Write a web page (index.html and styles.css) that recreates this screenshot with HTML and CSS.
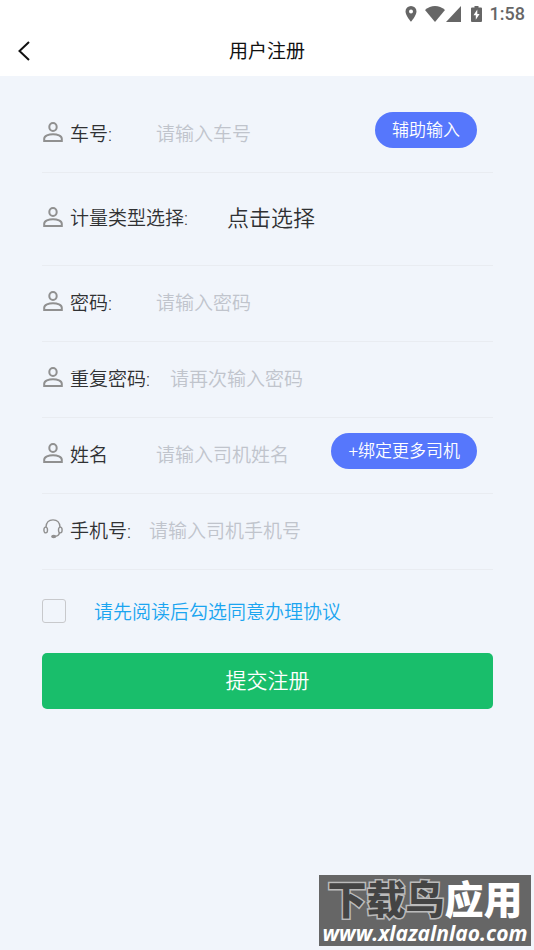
FILE: index.html
```html
<!DOCTYPE html>
<html lang="zh-CN">
<head>
<meta charset="utf-8">
<meta name="viewport" content="width=device-width, initial-scale=1">
<title>用户注册</title>
<link rel="stylesheet" href="styles.css">
</head>
<body>
<svg class="sprite" aria-hidden="true">
  <symbol id="person" viewBox="0 0 20 20">
    <ellipse cx="10" cy="5" rx="3.700" ry="4"/>
    <path d="M1.200 19v-2.200c0-2.900 4.400-4.600 8.800-4.600s8.800 1.700 8.800 4.600V19z"/>
  </symbol>
  <symbol id="headset" viewBox="0 0 20 20">
    <path d="M3 8C3.300 3.600 6.100.9 10 .9S16.700 3.600 17 8"/>
    <ellipse cx="2.700" cy="11" rx="1.800" ry="2.900"/>
    <ellipse cx="17.300" cy="11" rx="1.800" ry="2.900"/>
    <path d="M16.600 13.700c-.5 2.200-1.900 3.400-4.200 3.700"/>
    <ellipse cx="10.700" cy="17.500" rx="1.900" ry="1" fill="currentColor"/>
  </symbol>
</svg>
<div class="status">
  <svg class="status-pin" width="12" height="16" viewBox="0 0 12 16"><path fill-rule="evenodd" d="M6 0a5.500 5.500 0 0 0-5.500 5.500C.5 9.600 6 15.700 6 15.700s5.500-6.100 5.500-10.200A5.500 5.500 0 0 0 6 0zm0 3.500a2 2 0 1 1 0 4 2 2 0 0 1 0-4z"/></svg>
  <svg class="status-wifi" width="20" height="16" viewBox="0 0 20 16"><path d="M0 4C6-1.300 14-1.300 20 4L10 16z"/></svg>
  <svg class="status-signal" width="15" height="16" viewBox="0 0 15 16"><path d="M15 0v16H0z"/></svg>
  <svg class="status-battery" width="11" height="16" viewBox="0 0 11 16"><path fill-rule="evenodd" d="M3.500 0h4v1.500H10q1 0 1 1V15q0 1-1 1H1q-1 0-1-1V2.500q0-1 1-1h2.500zM6.300 3.500L2.500 9.300h2.300v4.500L8.600 8H6.300z"/></svg>
  <span class="clock">1:58</span>
</div>
<header class="header">
  <button class="back" type="button" aria-label="返回"><svg width="12" height="20" viewBox="0 0 12 20"><path d="M11 1L1.500 10 11 19"/></svg></button>
  <h1 class="title">用户注册</h1>
</header>
<main class="page">
  <form class="form">
    <div class="row">
      <svg class="icon"><use href="#person"/></svg>
      <label class="label" for="plate">车号:</label>
      <input class="field" id="plate" type="text" placeholder="请输入车号">
      <button class="pill" type="button">辅助输入</button>
    </div>
    <div class="row row-tall">
      <svg class="icon"><use href="#person"/></svg>
      <label class="label" for="measure">计量类型选择:</label>
      <select class="picker" id="measure"><option>点击选择</option></select>
    </div>
    <div class="row">
      <svg class="icon"><use href="#person"/></svg>
      <label class="label" for="password">密码:</label>
      <input class="field" id="password" type="password" placeholder="请输入密码">
    </div>
    <div class="row">
      <svg class="icon"><use href="#person"/></svg>
      <label class="label" for="repeat">重复密码:</label>
      <input class="field" id="repeat" type="password" placeholder="请再次输入密码">
    </div>
    <div class="row">
      <svg class="icon"><use href="#person"/></svg>
      <label class="label" for="name">姓名</label>
      <input class="field" id="name" type="text" placeholder="请输入司机姓名">
      <button class="pill" type="button">+绑定更多司机</button>
    </div>
    <div class="row">
      <svg class="icon icon-headset"><use href="#headset"/></svg>
      <label class="label label-phone" for="phone">手机号:</label>
      <input class="field" id="phone" type="tel" placeholder="请输入司机手机号">
    </div>
    <div class="agree">
      <input class="check" id="agree" type="checkbox">
      <label for="agree">请先阅读后勾选同意办理协议</label>
    </div>
    <button class="submit" type="submit">提交注册</button>
  </form>
</main>
<aside class="watermark">
  <div class="brand"><span class="brand-dark">下载鸟</span><span>应用</span></div>
  <div class="site">www.xlazalnlao.com</div>
</aside>
</body>
</html>
```

FILE: styles.css
```css
* {
  box-sizing: border-box;
}

body {
  margin: 0;
  min-height: 100vh;
  position: relative;
  background: #f1f5fb;
  color: #303133;
  font-family: Roboto, "Noto Sans CJK SC", sans-serif;
  font-size: 19px;
  font-weight: 350;
  line-height: 28px;
}

button,
input,
select {
  font: inherit;
  color: inherit;
  margin: 0;
  padding: 0;
  border: 0;
  background: none;
}

.sprite {
  position: absolute;
  width: 0;
  height: 0;
}

.status {
  display: flex;
  align-items: center;
  justify-content: flex-end;
  height: 28px;
  padding-right: 9px;
  background: #fff;
  color: #666;
  fill: #666;
}

.status-wifi {
  margin-left: 8px;
}

.status-signal {
  margin-left: 1px;
}

.status-battery {
  margin-left: 10px;
}

.clock {
  margin-left: 8px;
  font-size: 18px;
  font-weight: 500;
}

.header {
  display: grid;
  grid-template-columns: 48px 1fr 48px;
  align-items: center;
  height: 48px;
  background: #fff;
  color: #111;
}

.back {
  display: flex;
  height: 46px;
  padding: 0 0 2px 18px;
  align-items: center;
}

.back svg {
  fill: none;
  stroke: #111;
  stroke-width: 2;
}

.title {
  margin: 0;
  text-align: center;
  font-size: 19px;
  font-weight: 400;
}

.page {
  padding: 21px 41px 21px 42px;
}

.row {
  display: flex;
  align-items: center;
  height: 76px;
  border-bottom: 1px solid #e9ecf1;
}

.row-tall {
  height: 93px;
}

.icon {
  flex: none;
  width: 20px;
  height: 20px;
  margin: 0 7px 5px 1px;
  fill: none;
  stroke: #909090;
  color: #909090;
  stroke-width: 2;
}

.icon-headset {
  stroke-width: 1.4;
}

.label {
  flex: none;
  min-width: 66px;
  margin-right: 20px;
}

.label-phone {
  min-width: 0;
  margin-right: 18px;
}

.field {
  flex: 1;
  min-width: 0;
  height: 36px;
  outline: 0;
}

.field::placeholder {
  color: #c0c4cc;
  opacity: 1;
}

.picker {
  appearance: none;
  margin-left: 19px;
  font-size: 22px;
}

.pill {
  flex: none;
  height: 36px;
  margin: 0 16px 9px 0;
  padding: 0 17px 1px;
  border-radius: 18px;
  background: #5677fc;
  color: #fff;
  font-size: 17px;
}

.agree {
  display: flex;
  align-items: flex-start;
  gap: 28px;
  margin: 29px 0 26px;
  color: #1ba5f0;
}

.check {
  appearance: none;
  width: 24px;
  height: 24px;
  border: 1px solid #c8c9cc;
  border-radius: 3px;
}

.check:checked {
  background: #1ba5f0;
}

.submit {
  display: block;
  width: 100%;
  height: 56px;
  border-radius: 5px;
  background: #19be6b;
  color: #fff;
  font-size: 21px;
}

.watermark {
  position: absolute;
  right: 3px;
  bottom: 4px;
  width: 212px;
  padding: 3px 0 1px;
  background: #666;
  color: #fff;
  text-align: center;
  white-space: nowrap;
}

.brand {
  margin-bottom: 4px;
  font-family: "Noto Sans CJK SC", sans-serif;
  font-size: 39px;
  font-weight: 900;
  line-height: 39px;
}

.brand-dark {
  color: #444;
  -webkit-text-stroke: 3px #bbb;
  paint-order: stroke fill;
}

.site {
  font-family: "Open Sans", sans-serif;
  font-size: 21px;
  font-weight: 700;
  font-style: italic;
  line-height: 24px;
}
```
